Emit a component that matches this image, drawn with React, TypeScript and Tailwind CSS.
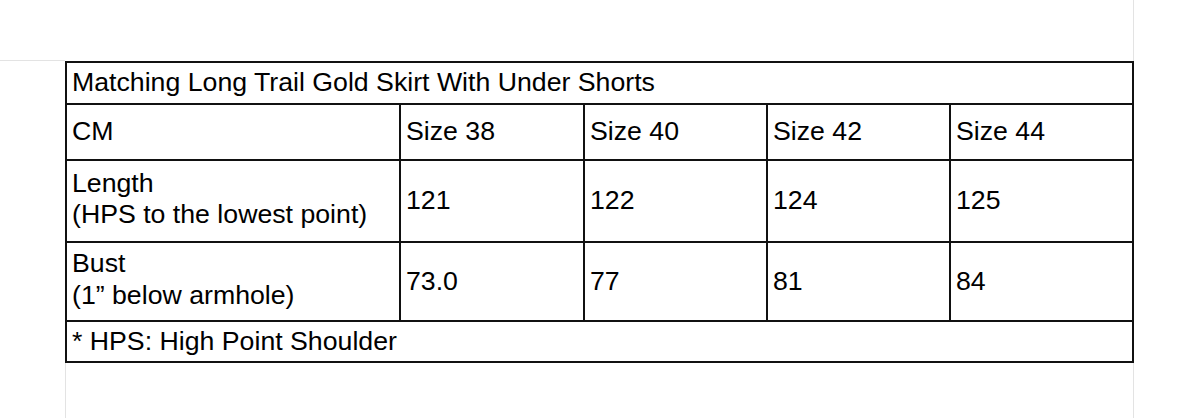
const sizes = ["Size 38", "Size 40", "Size 42", "Size 44"];

const rows = [
  { label: ["Length", "(HPS to the lowest point)"], values: ["121", "122", "124", "125"], height: "h-[82px]" },
  { label: ["Bust", "(1\u201d below armhole)"], values: ["73.0", "77", "81", "84"], height: "h-[79px]" },
];

// widths include the 2px left border of each cell
const colWidths = ["w-[184px]", "w-[183px]", "w-[183px]", "w-[183px]"];

export default function App() {
  return (
    <div
      className="w-[1200px] h-[418px] bg-white text-black overflow-hidden"
      style={{ fontFamily: '"Liberation Sans", Arial, sans-serif' }}
    >
      {/* sheet gridlines above the table */}
      <div className="w-[1134px] h-[61px] border-r border-[#e3e3e3] flex items-end">
        <div className="w-[65px] border-b border-[#e3e3e3]" />
      </div>

      <div className="ml-[65px] w-[1069px] border-2 border-[#111] text-[26.7px] leading-[31.5px]">
        {/* title */}
        <div className="h-[40px] flex items-center pl-[5px]">
          Matching Long Trail Gold Skirt With Under Shorts
        </div>

        {/* header */}
        <div className="h-[56px] flex border-t-2 border-[#111]">
          <div className="w-[332px] shrink-0 flex items-center pl-[5px]">CM</div>
          {sizes.map((s, i) => (
            <div key={s} className={`${colWidths[i]} shrink-0 border-l-2 border-[#111] flex items-center pl-[5px]`}>
              {s}
            </div>
          ))}
        </div>

        {rows.map((row) => (
          <div key={row.label[0]} className={`${row.height} flex border-t-2 border-[#111]`}>
            <div className="w-[332px] shrink-0 flex flex-col justify-center pl-[5px] pb-[4px]">
              <span>{row.label[0]}</span>
              <span>{row.label[1]}</span>
            </div>
            {row.values.map((v, i) => (
              <div key={i} className={`${colWidths[i]} shrink-0 border-l-2 border-[#111] flex items-center pl-[5px]`}>
                {v}
              </div>
            ))}
          </div>
        ))}

        {/* footnote */}
        <div className="h-[41px] flex items-center pl-[5px] border-t-2 border-[#111]">
          * HPS: High Point Shoulder
        </div>
      </div>

      {/* sheet gridlines below the table */}
      <div className="ml-[65px] w-[1069px] h-[60px] border-l border-r border-[#e3e3e3]" />
    </div>
  );
}
